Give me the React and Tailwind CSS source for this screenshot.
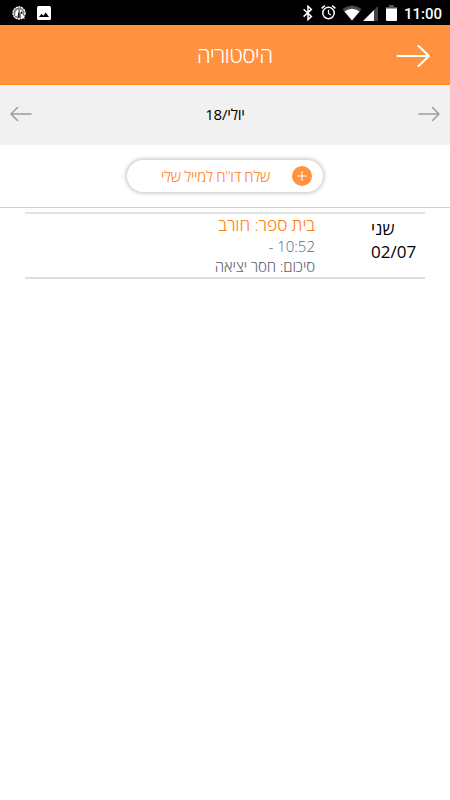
import React from 'react';

const RECORDS = [
  { day: 'שני', date: '02/07', school: 'בית ספר: חורב', hours: '10:52 -', summary: 'סיכום: חסר יציאה' },
];

const StatusBar = () => (
  <div dir="ltr" className="flex h-[25px] items-center justify-between bg-black text-white">
    <div className="flex items-center pl-3">
      <svg width="14" height="14" viewBox="0 0 14 14" className="mr-[11px]">
        <circle cx="7" cy="7" r="6" fill="#777" stroke="#fff" strokeWidth="1.3" strokeDasharray="2.2 0.5" />
        <path d="M3 9.5 3.6 5.5 6 3 6.5 6 5.3 10.5ZM7.5 3 10.5 4.8 10.8 9 13 13 9 11.5 8.8 7.5Z" fill="#fff" />
        <path d="M6.8 6.5v5M9.6 5.5l.2 2.5" stroke="#000" strokeWidth="1.1" />
      </svg>
      <svg width="14" height="14" viewBox="0 0 14 14">
        <rect width="14" height="14" rx="1.5" fill="#fff" />
        <path d="M2 11 4.5 7.8 6.3 9.8 8.8 6.5 12 11Z" fill="#000" />
      </svg>
    </div>
    <div className="flex items-center pr-2">
      <svg width="10" height="16" viewBox="0 0 10 16" fill="none" stroke="#fff" strokeWidth="1.5" className="mr-[8px]">
        <path d="M.6 4.3 8.4 11.4 5 14.6V1.2L8.4 4.4.6 11.6" />
      </svg>
      <svg width="15" height="15" viewBox="0 0 15 15" fill="none" stroke="#fff" className="mr-[6px]">
        <circle cx="7.5" cy="8" r="5.7" strokeWidth="1.5" />
        <path d="M7.5 4.8v3.6l2.4 1.5" strokeWidth="1.2" />
        <path d="M.6 3.3 3.8.7M11.2.7l3.2 2.6" strokeWidth="1.5" />
      </svg>
      <svg width="20" height="16" viewBox="0 0 20 16" className="mt-px mr-px">
        <path d="M.3 4Q10-3.2 19.7 4L10 15.5Z" fill="#4a4a4a" />
        <path d="M2.4 6.4Q10 1 17.6 6.4L10 15.5Z" fill="#fff" />
      </svg>
      <svg width="15" height="15" viewBox="0 0 15 15" className="mt-px mr-2">
        <path d="M11 4 15 0V15H11Z" fill="#444" />
        <path d="M0 15 11 4V15Z" fill="#fff" />
      </svg>
      <svg width="11" height="16" viewBox="0 0 11 16" className="mt-px mr-[7px]">
        <path d="M0 2h3V0h5v2h3v2H0Z" fill="#555" />
        <path d="M0 3.5h11V15a1 1 0 0 1-1 1H1a1 1 0 0 1-1-1Z" fill="#fff" />
      </svg>
      <span className="pt-[3px] font-[Roboto] text-[15px] leading-none font-medium">11:00</span>
    </div>
  </div>
);

const App = () => (
  <div dir="rtl" className="h-[800px] w-[450px] overflow-hidden bg-white font-['Open_Sans',sans-serif] font-light">
    <StatusBar />

    {/* Title */}
    <header className="grid h-[60px] grid-cols-[68px_1fr_87px] items-center border-b border-[#ff8a1c] bg-[#ff913f] text-white">
      <button className="flex pt-[2px] pr-5">
        <svg width="34" height="24" viewBox="0 0 34 24" fill="none" stroke="#fff" strokeWidth="2.1" strokeLinecap="round" strokeLinejoin="round">
          <path d="M1.5 12H33M22.5 2 33 12 22.5 22" />
        </svg>
      </button>
      <h1 className="pt-px text-center text-[22.5px] leading-none tracking-[-0.75px]">היסטוריה</h1>
    </header>

    {/* Month picker */}
    <nav className="flex h-[60px] items-center justify-between bg-[#f1f1f1] px-[10px] pb-[2px] text-black">
      <svg width="22" height="16" viewBox="0 0 22 16" fill="none" stroke="#9a9da3" strokeWidth="1.5" strokeLinecap="round" strokeLinejoin="round">
        <path d="M1 8H21M14.5 1.5 21 8 14.5 14.5" />
      </svg>
      <span className="pt-px text-[15px] font-normal tracking-[-0.2px]">יולי/18</span>
      <svg width="22" height="16" viewBox="0 0 22 16" fill="none" stroke="#9a9da3" strokeWidth="1.5" strokeLinecap="round" strokeLinejoin="round">
        <path d="M21 8H1M7.5 1.5 1 8 7.5 14.5" />
      </svg>
    </nav>

    {/* Send report */}
    <div className="flex h-[63px] justify-center border-b border-[#d2d2d2] pt-[15px]">
      <button className="flex h-8 w-[196px] items-center rounded-full bg-white pr-[11px] text-[#ff7c22] shadow-[0_0_4px_1px_rgba(0,0,0,0.25)]">
        <svg width="20" height="20" viewBox="0 0 20 20">
          <circle cx="10" cy="10" r="10" fill="#ff913f" />
          <path d="M10 5v10M5 10h10" stroke="#fff" strokeWidth="1" />
        </svg>
        <span className="mr-[22px] text-[15px] tracking-[-0.3px] whitespace-nowrap">שלח דו''ח למייל שלי</span>
      </button>
    </div>

    {/* Records */}
    <ul className="mx-[25px] mt-1 border-t-2 border-[#e3e3e3]">
      {RECORDS.map((r) => (
        <li key={r.date} className="flex h-[65px] border-b-2 border-[#dedede]">
          <div dir="ltr" className="w-[54px] pt-[3px] text-[17px] leading-[23px] font-normal text-black">
            <p>{r.day}</p>
            <p>{r.date}</p>
          </div>
          <div className="mr-[56px] pt-px text-[15px] leading-[20.5px] text-[#5d6370]">
            <p className="text-[17.2px] text-[#ff7c10]">{r.school}</p>
            <p>{r.hours}</p>
            <p className="tracking-[-0.1px]">{r.summary}</p>
          </div>
        </li>
      ))}
    </ul>
  </div>
);

export default App;
